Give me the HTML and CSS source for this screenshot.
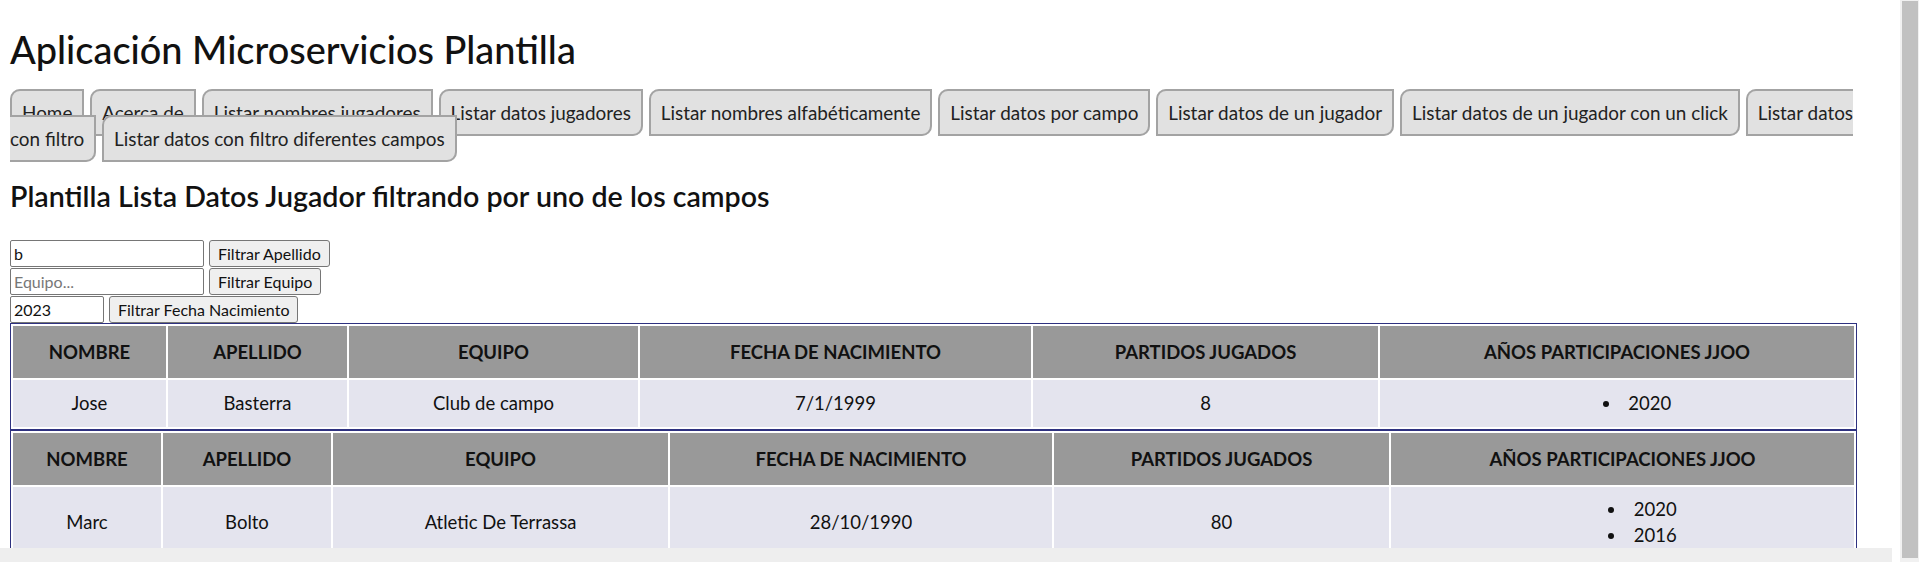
FILE: index.html
```html
<!DOCTYPE html>
<html lang="es">
<head>
<meta charset="utf-8">
<title>Aplicación Microservicios Plantilla</title>
<link rel="stylesheet" href="styles.css">
</head>
<body>
<div class="screen">
<div class="viewport">
<div class="page">
  <h1 class="title">Aplicación Microservicios Plantilla</h1>
  <nav class="menu">
    <a class="menu-link" href="#">Home</a>
    <a class="menu-link" href="#">Acerca de</a>
    <a class="menu-link" href="#">Listar nombres jugadores</a>
    <a class="menu-link" href="#">Listar datos jugadores</a>
    <a class="menu-link" href="#">Listar nombres alfabéticamente</a>
    <a class="menu-link" href="#">Listar datos por campo</a>
    <a class="menu-link" href="#">Listar datos de un jugador</a>
    <a class="menu-link" href="#">Listar datos de un jugador con un click</a>
    <a class="menu-link" href="#">Listar datos con filtro</a>
    <a class="menu-link" href="#">Listar datos con filtro diferentes campos</a>
  </nav>
  <h2 class="subtitle">Plantilla Lista Datos Jugador filtrando por uno de los campos</h2>
  <div class="filters">
    <div class="filter-row">
      <input class="filter-input" type="text" value="b" placeholder="Apellido...">
      <button class="filter-btn" type="button">Filtrar Apellido</button>
    </div>
    <div class="filter-row">
      <input class="filter-input" type="text" placeholder="Equipo...">
      <button class="filter-btn" type="button">Filtrar Equipo</button>
    </div>
    <div class="filter-row">
      <input class="filter-input filter-input-short" type="text" value="2023">
      <button class="filter-btn" type="button">Filtrar Fecha Nacimiento</button>
    </div>
  </div>
  <table class="players players-a">
    <colgroup>
      <col class="col-nombre"><col class="col-apellido"><col class="col-equipo"><col class="col-fecha"><col class="col-partidos"><col class="col-anios">
    </colgroup>
    <thead>
      <tr>
        <th>Nombre</th><th>Apellido</th><th>Equipo</th><th>Fecha de nacimiento</th><th>Partidos jugados</th><th>Años participaciones JJOO</th>
      </tr>
    </thead>
    <tbody>
      <tr>
        <td>Jose</td><td>Basterra</td><td>Club de campo</td><td>7/1/1999</td><td>8</td>
        <td><ul class="years"><li>2020</li></ul></td>
      </tr>
    </tbody>
  </table>
  <table class="players players-b">
    <colgroup>
      <col class="col-nombre"><col class="col-apellido"><col class="col-equipo"><col class="col-fecha"><col class="col-partidos"><col class="col-anios">
    </colgroup>
    <thead>
      <tr>
        <th>Nombre</th><th>Apellido</th><th>Equipo</th><th>Fecha de nacimiento</th><th>Partidos jugados</th><th>Años participaciones JJOO</th>
      </tr>
    </thead>
    <tbody>
      <tr>
        <td>Marc</td><td>Bolto</td><td>Atletic De Terrassa</td><td>28/10/1990</td><td>80</td>
        <td><ul class="years"><li>2020</li><li>2016</li></ul></td>
      </tr>
    </tbody>
  </table>
</div>
</div>
<div class="vscroll"><div class="vthumb"></div></div>
<div class="hscroll"></div>
</div>
</body>
</html>
```
FILE: styles.css
```css
html, body {
  margin: 0;
  padding: 0;
  height: 100%;
  overflow: hidden;
}
body {
  font-family: Lato, "Liberation Sans", sans-serif;
  color: #111;
  background: #fff;
}
.screen {
  display: grid;
  grid-template-columns: 1fr 19px;
  grid-template-rows: 548px 14px;
  height: 562px;
}
.viewport {
  grid-column: 1;
  grid-row: 1;
  overflow: hidden;
}
.vscroll {
  grid-column: 2;
  grid-row: 1 / 3;
  display: flex;
  padding: 1px 1px 4px 2px;
  background: #f1f1f1;
}
.vthumb {
  flex: 1;
  background: #c1c1c1;
}
.hscroll {
  grid-column: 1;
  grid-row: 2;
  margin-right: 8px;
  background: #eeeeee;
}
.page {
  padding: 26px 43px 12px 10px;
}
.title {
  margin: 0 0 26px 0;
  font-size: 37.9px;
  line-height: 48px;
  font-weight: 500;
}
.menu {
  font-size: 18.9px;
  line-height: 26px;
}
.menu-link {
  padding: 10px 10px;
  margin-right: 1px;
  border: 2px solid #a3a3a3;
  border-radius: 10px 0 10px 0;
  background: #e1e1e1;
  color: #222;
  text-decoration: none;
}
.subtitle {
  margin: 26px 0 26px 0;
  font-size: 28.6px;
  line-height: 36px;
  font-weight: 600;
}
.filter-row {
  display: flex;
  gap: 5px;
  margin-bottom: 1px;
}
.filters {
  margin-bottom: -1px;
}
.filter-input {
  box-sizing: border-box;
  width: 194px;
  height: 27px;
  border: 1px solid #767676;
  border-radius: 2px;
  padding: 1px 3px;
  font-family: Lato, "Liberation Sans", sans-serif;
  font-size: 16px;
  color: #111;
}
.filter-input::placeholder {
  color: #777;
}
.filter-input-short {
  width: 94px;
}
.filter-btn {
  box-sizing: border-box;
  height: 27px;
  border: 1px solid #767676;
  border-radius: 3px;
  padding: 0 8px;
  background: #efefef;
  font-family: Lato, "Liberation Sans", sans-serif;
  font-size: 16px;
  color: #111;
}
.players {
  width: 100%;
  table-layout: fixed;
  border: 1px solid #2e3180;
  border-spacing: 2px;
  font-size: 18.5px;
  text-align: center;
}
.players th {
  padding: 14px 6px;
  line-height: 24px;
  background: #999999;
  font-weight: 700;
  text-transform: uppercase;
}
.players td {
  padding: 10.5px 6px;
  line-height: 25.5px;
  background: #e4e4ee;
}
.players-a .col-nombre { width: 153px; }
.players-a .col-apellido { width: 179px; }
.players-a .col-equipo { width: 289px; }
.players-a .col-fecha { width: 391px; }
.players-a .col-partidos { width: 345px; }
.players-b .col-nombre { width: 148px; }
.players-b .col-apellido { width: 168px; }
.players-b .col-equipo { width: 335px; }
.players-b .col-fecha { width: 382px; }
.players-b .col-partidos { width: 335px; }
.years {
  margin: 0;
  padding-left: 40px;
  list-style-position: inside;
}
```
